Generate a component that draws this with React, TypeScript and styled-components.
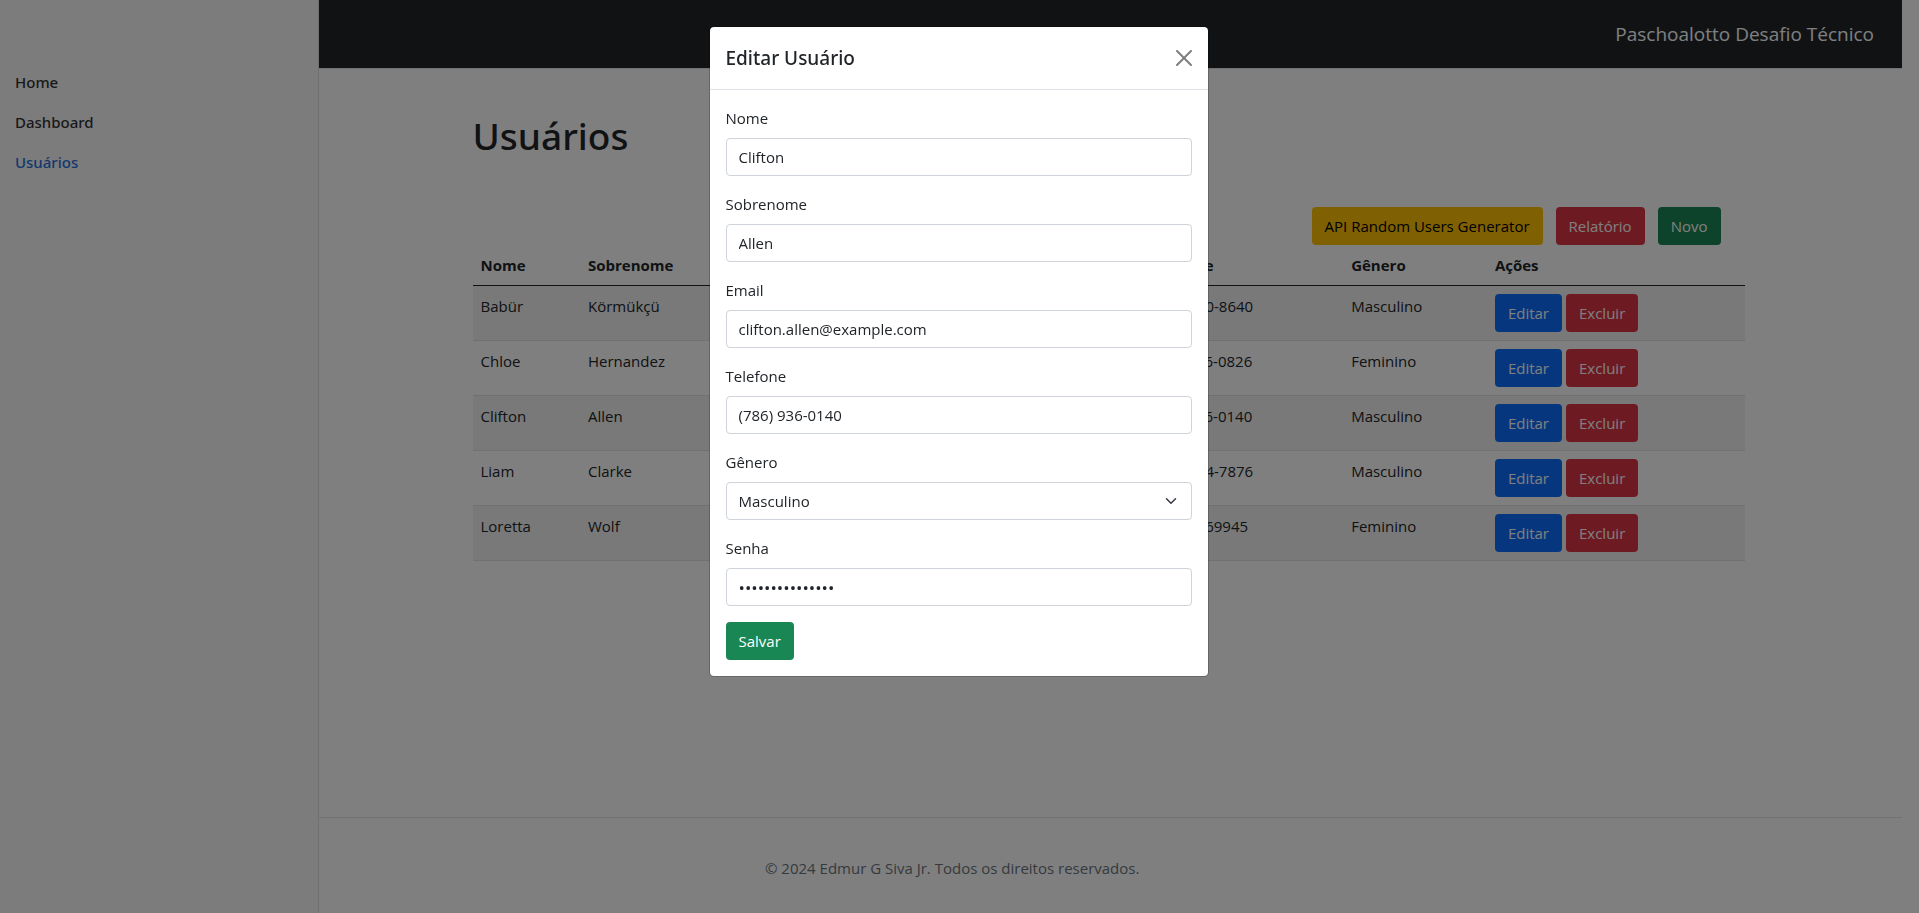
import React from 'react';
import styled, { createGlobalStyle, css } from 'styled-components';

const GlobalStyle = createGlobalStyle`
  *, *::before, *::after { box-sizing: border-box; }
  body {
    margin: 0;
    overflow: hidden;
    background: #fff;
    color: #212529;
    font-family: "Open Sans", "Noto Sans", sans-serif;
    font-size: 15px;
    line-height: 24px;
  }
`;

const mediumText = css`
  font-family: "Noto Sans", "Open Sans", sans-serif;
  font-weight: 500;
`;

const Page = styled.div`
  display: flex;
  min-height: 100vh;
  padding-right: 17px;
`;

const Sidebar = styled.nav`
  display: flex;
  flex-direction: column;
  flex: 0 0 319px;
  padding-top: 62px;
  background: #f8f9fa;
  border-right: 1px solid #dfdfdf;
`;

const SideLink = styled.a<{ $active?: boolean }>`
  ${mediumText}
  padding: 8px 15px;
  color: ${(p) => (p.$active ? '#2470dc' : '#333')};
  text-decoration: none;
`;

const Main = styled.div`
  display: flex;
  flex: 1;
  flex-direction: column;
  min-width: 0;
`;

const TopBar = styled.header`
  display: flex;
  align-items: center;
  justify-content: flex-end;
  height: 69px;
  padding: 0 28px;
  background: #212529;
  border-bottom: 1px solid #dee2e6;
`;

const Brand = styled.a`
  color: #fff;
  font-size: 19px;
  text-decoration: none;
`;

const Content = styled.main`
  width: 100%;
  max-width: 1320px;
  margin: 0 auto;
  padding: 43px 26px 0 22px;
`;

const PageTitle = styled.h1`
  ${mediumText}
  margin: 0 0 47px;
  font-size: 37px;
  line-height: 48px;
`;

const Toolbar = styled.div`
  display: flex;
  justify-content: flex-end;
  gap: 13px;
  padding-right: 24px;
`;

const tones = {
  primary: css`background: #0d6efd; color: #fff;`,
  danger: css`background: #dc3545; color: #fff;`,
  success: css`background: #198754; color: #fff;`,
  warning: css`background: #ffc107; color: #000;`,
};

const Button = styled.button<{ $tone: keyof typeof tones }>`
  height: 38px;
  padding: 0 13px;
  border: 0;
  border-radius: 4px;
  font: inherit;
  cursor: pointer;
  ${(p) => tones[p.$tone]}
`;

const Table = styled.table`
  width: 100%;
  table-layout: fixed;
  border-collapse: separate;
  border-spacing: 0;
`;

const HeadCell = styled.th<{ $width: string }>`
  width: ${(p) => p.$width};
  padding: 8px;
  border-bottom: 1px solid #212529;
  font-weight: 700;
  text-align: left;
`;

const Row = styled.tr`
  &:nth-child(odd) { background: #f2f2f2; }
`;

const Cell = styled.td`
  padding: 8px;
  border-bottom: 1px solid #dee2e6;
  vertical-align: top;
  white-space: nowrap;
`;

const RowActions = styled.div`
  display: flex;
  gap: 4px;
`;

const Footer = styled.footer`
  margin-top: auto;
  padding: 38px 0 33px;
  border-top: 1px solid #dee2e6;
`;

const Copyright = styled.p`
  width: 80%;
  margin: 0;
  color: #6c757d;
  text-align: center;
`;

const Overlay = styled.div`
  position: fixed;
  inset: 0;
  overflow: hidden;
  padding: 26px 10px 26px 8px;
  background: rgba(0, 0, 0, 0.5);
`;

const Dialog = styled.section`
  width: 100%;
  max-width: 500px;
  margin: 0 auto;
  background: #fff;
  background-clip: padding-box;
  border: 1px solid rgba(0, 0, 0, 0.2);
  border-radius: 5px;
`;

const DialogHeader = styled.header`
  display: flex;
  align-items: center;
  justify-content: space-between;
  padding: 16px;
  border-bottom: 1px solid #dee2e6;
`;

const DialogTitle = styled.h2`
  ${mediumText}
  margin: 0;
  font-size: 19px;
  line-height: 30px;
`;

const CloseButton = styled.button`
  display: flex;
  padding: 0;
  border: 0;
  background: none;
  opacity: 0.5;
  cursor: pointer;
`;

const Form = styled.form`
  display: flex;
  flex-direction: column;
  align-items: flex-start;
  gap: 16px;
  padding: 16px;
`;

const Field = styled.div`
  display: flex;
  flex-direction: column;
  gap: 8px;
  width: 100%;
`;

const control = css`
  width: 100%;
  height: 38px;
  padding: 6px 12px;
  border: 1px solid #ced4da;
  border-radius: 4px;
  background: #fff;
  color: #212529;
  font: inherit;
`;

const Input = styled.input`
  ${control}
  &[type='password'] { font-size: 17px; }
`;

const Select = styled.select`
  ${control}
  appearance: none;
`;

const SelectBox = styled.div`
  position: relative;
`;

const Chevron = styled.svg`
  position: absolute;
  top: 13px;
  right: 13px;
  pointer-events: none;
`;

const columns = [
  { title: 'Nome', width: '8.45%' },
  { title: 'Sobrenome', width: '19%' },
  { title: 'Email', width: '25.1%' },
  { title: 'Telefone', width: '15.9%' },
  { title: 'Gênero', width: '11.3%' },
  { title: 'Ações', width: '20.25%' },
];

const users = [
  { name: 'Babür', surname: 'Körmükçü', email: 'babur.kormukcu@example.com', phone: '(420)-640-8640', gender: 'Masculino' },
  { name: 'Chloe', surname: 'Hernandez', email: 'chloe.hernandez@example.com', phone: '(524) 416-0826', gender: 'Feminino' },
  { name: 'Clifton', surname: 'Allen', email: 'clifton.allen@example.com', phone: '(786) 936-0140', gender: 'Masculino' },
  { name: 'Liam', surname: 'Clarke', email: 'liam.clarke@example.com', phone: '(312)-984-7876', gender: 'Masculino' },
  { name: 'Loretta', surname: 'Wolf', email: 'loretta.wolf@example.com', phone: '0451-4469945', gender: 'Feminino' },
];

const fields = [
  { id: 'nome', label: 'Nome', type: 'text', value: 'Clifton' },
  { id: 'sobrenome', label: 'Sobrenome', type: 'text', value: 'Allen' },
  { id: 'email', label: 'Email', type: 'email', value: 'clifton.allen@example.com' },
  { id: 'telefone', label: 'Telefone', type: 'tel', value: '(786) 936-0140' },
];

function EditUserDialog() {
  return (
    <Overlay>
      <Dialog role="dialog" aria-modal="true" aria-labelledby="dialog-title">
        <DialogHeader>
          <DialogTitle id="dialog-title">Editar Usuário</DialogTitle>
          <CloseButton type="button" aria-label="Fechar">
            <svg width="16" height="16" viewBox="0 0 16 16" fill="#000">
              <path d="M.293.293a1 1 0 011.414 0L8 6.586 14.293.293a1 1 0 111.414 1.414L9.414 8l6.293 6.293a1 1 0 01-1.414 1.414L8 9.414l-6.293 6.293a1 1 0 01-1.414-1.414L6.586 8 .293 1.707a1 1 0 010-1.414z" />
            </svg>
          </CloseButton>
        </DialogHeader>
        <Form onSubmit={(e) => e.preventDefault()}>
          {fields.map((f) => (
            <Field key={f.id}>
              <label htmlFor={f.id}>{f.label}</label>
              <Input id={f.id} type={f.type} defaultValue={f.value} />
            </Field>
          ))}
          <Field>
            <label htmlFor="genero">Gênero</label>
            <SelectBox>
              <Select id="genero" defaultValue="Masculino">
                <option>Masculino</option>
                <option>Feminino</option>
              </Select>
              <Chevron width="16" height="12" viewBox="0 0 16 16" fill="none" aria-hidden="true">
                <path d="M2 5l6 6 6-6" stroke="#343a40" strokeWidth="2" strokeLinecap="round" strokeLinejoin="round" />
              </Chevron>
            </SelectBox>
          </Field>
          <Field>
            <label htmlFor="senha">Senha</label>
            <Input id="senha" type="password" defaultValue="senha1234567890" />
          </Field>
          <Button type="submit" $tone="success">Salvar</Button>
        </Form>
      </Dialog>
    </Overlay>
  );
}

export default function App() {
  return (
    <>
      <GlobalStyle />
      <Page>
        <Sidebar>
          <SideLink href="#home">Home</SideLink>
          <SideLink href="#dashboard">Dashboard</SideLink>
          <SideLink href="#usuarios" $active>Usuários</SideLink>
        </Sidebar>
        <Main>
          <TopBar>
            <Brand href="#home">Paschoalotto Desafio Técnico</Brand>
          </TopBar>
          <Content>
            <PageTitle>Usuários</PageTitle>
            <Toolbar>
              <Button type="button" $tone="warning">API Random Users Generator</Button>
              <Button type="button" $tone="danger">Relatório</Button>
              <Button type="button" $tone="success">Novo</Button>
            </Toolbar>
            <Table>
              <thead>
                <tr>
                  {columns.map((c) => (
                    <HeadCell key={c.title} scope="col" $width={c.width}>{c.title}</HeadCell>
                  ))}
                </tr>
              </thead>
              <tbody>
                {users.map((u) => (
                  <Row key={u.email}>
                    <Cell>{u.name}</Cell>
                    <Cell>{u.surname}</Cell>
                    <Cell>{u.email}</Cell>
                    <Cell>{u.phone}</Cell>
                    <Cell>{u.gender}</Cell>
                    <Cell>
                      <RowActions>
                        <Button type="button" $tone="primary">Editar</Button>
                        <Button type="button" $tone="danger">Excluir</Button>
                      </RowActions>
                    </Cell>
                  </Row>
                ))}
              </tbody>
            </Table>
          </Content>
          <Footer>
            <Copyright>© 2024 Edmur G Siva Jr. Todos os direitos reservados.</Copyright>
          </Footer>
        </Main>
      </Page>
      <EditUserDialog />
    </>
  );
}
